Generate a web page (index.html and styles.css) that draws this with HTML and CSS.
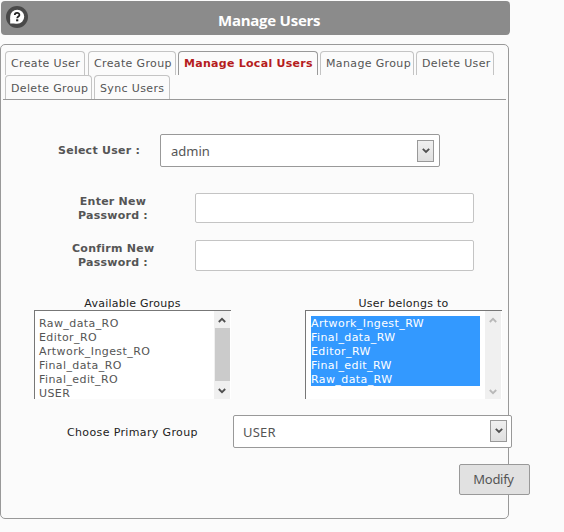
FILE: index.html
```html
<!DOCTYPE html>
<html lang="en">
<head>
<meta charset="utf-8">
<title>Manage Users</title>
<link rel="stylesheet" href="styles.css">
</head>
<body>
<header class="header">
  <svg class="help" width="22" height="22" viewBox="0 0 22 22">
    <circle cx="11" cy="11" r="11" fill="#494949"/>
    <circle cx="11.2" cy="10.7" r="7" fill="#fff"/>
    <path d="M4.2 11V17.6H11Z" fill="#fff"/>
    <path d="M8.8 9C8.8 6.2 13.4 6.2 13.4 8.9C13.4 10.5 11.2 10.5 11.2 12.3" fill="none" stroke="#222" stroke-width="2"/>
    <rect x="10.1" y="13.3" width="2.2" height="2" fill="#222"/>
  </svg>
  <h1 class="title">Manage Users</h1>
</header>
<main class="panel">
  <nav class="tabs">
    <div class="tab-row">
      <a class="tab create-user"><span>Create User</span></a>
      <a class="tab create-group"><span>Create Group</span></a>
      <a class="tab active"><span>Manage Local Users</span></a>
      <a class="tab manage-group"><span>Manage Group</span></a>
      <a class="tab delete-user"><span>Delete User</span></a>
    </div>
    <div class="tab-row second">
      <a class="tab delete-group"><span>Delete Group</span></a>
      <a class="tab sync-users"><span>Sync Users</span></a>
    </div>
  </nav>
  <div class="row user-row">
    <label class="label">Select User :</label>
    <div class="select user-select"><span class="value">admin</span><span class="drop"><svg width="8" height="6" viewBox="0 0 8 6"><path d="M.8 .8L4 4L7.2 .8"/></svg></span></div>
  </div>
  <div class="row password-row">
    <label class="label">Enter New<br>Password :</label>
    <div class="input"></div>
  </div>
  <div class="row confirm-row">
    <label class="label">Confirm New<br>Password :</label>
    <div class="input"></div>
  </div>
  <div class="groups">
    <section class="group">
      <h2 class="caption">Available Groups</h2>
      <div class="list">
        <ul class="items">
          <li>Raw_data_RO</li><li>Editor_RO</li><li>Artwork_Ingest_RO</li><li>Final_data_RO</li><li>Final_edit_RO</li><li>USER</li>
        </ul>
        <div class="scroll"><svg width="8" height="6" viewBox="0 0 8 6"><path d="M.8 5L4 1.8L7.2 5"/></svg><i class="thumb"></i><svg width="8" height="6" viewBox="0 0 8 6"><path d="M.8 1L4 4.2L7.2 1"/></svg></div>
      </div>
    </section>
    <section class="group">
      <h2 class="caption">User belongs to</h2>
      <div class="list">
        <ul class="items selected">
          <li>Artwork_Ingest_RW</li><li>Final_data_RW</li><li>Editor_RW</li><li>Final_edit_RW</li><li>Raw_data_RW</li>
        </ul>
        <div class="scroll disabled"><svg width="8" height="6" viewBox="0 0 8 6"><path d="M.8 5L4 1.8L7.2 5"/></svg><svg width="8" height="6" viewBox="0 0 8 6"><path d="M.8 1L4 4.2L7.2 1"/></svg></div>
      </div>
    </section>
  </div>
  <div class="row primary-row">
    <label class="primary-label">Choose Primary Group</label>
    <div class="select primary-select"><span class="value">USER</span><span class="drop"><svg width="8" height="6" viewBox="0 0 8 6"><path d="M.8 .8L4 4L7.2 .8"/></svg></span></div>
  </div>
  <button class="modify">Modify</button>
</main>
</body>
</html>
```
FILE: styles.css
```css
* { box-sizing: border-box; }
body {
  margin: 0;
  height: 532px;
  overflow: hidden;
  background: #fbfbfb;
  color: #555;
  font: 11px/14px "DejaVu Sans", sans-serif;
  letter-spacing: .36px;
}
.header {
  display: flex;
  width: 509px;
  height: 34px;
  margin: 1px 0 0 1px;
  border-radius: 4px;
  background: #8b8b8b;
}
.help { flex: none; margin: 5px 0 0 5px; }
.title {
  width: 104px;
  margin: 9px 0 0 190px;
  font: bold 15px/20px "Open Sans", sans-serif;
  letter-spacing: -.25px;
  color: #fff;
  white-space: nowrap;
}
.panel {
  width: 509px;
  height: 475px;
  margin-top: 9px;
  border: 1px solid #999;
  border-radius: 5px;
}
.tabs {
  width: 503px;
  margin: 6px 0 0 2px;
  padding-left: 2px;
  border-bottom: 1px solid #999;
}
.tab-row { display: flex; gap: 3px; height: 24px; }
.tab {
  flex: none;
  height: 24px;
  padding: 5px 0 0 5px;
  border: 1px solid #c4c4c4;
  border-bottom: 0;
  border-radius: 4px 4px 0 0;
  white-space: nowrap;
}
.second .tab { padding-top: 6px; }
.create-user { width: 80px; }
.create-group { width: 88px; margin-right: -1px; }
.active { width: 140px; margin-right: -1px; border-color: #999; color: #b51c20; font-weight: bold; letter-spacing: .28px; }
.manage-group { width: 94px; margin-right: -1px; }
.delete-user { width: 78px; }
.delete-group { width: 87px; margin-right: -1px; }
.sync-users { width: 76px; }
.row { display: flex; }
.label { flex: none; font-weight: bold; letter-spacing: .25px; text-align: center; white-space: nowrap; }
.user-row { margin: 34px 0 0 57px; }
.user-row .label { width: 102px; padding-top: 10px; text-align: left; }
.select {
  display: flex;
  flex: none;
  justify-content: space-between;
  height: 33px;
  border: 1px solid #999;
  border-radius: 2px;
  background: #fff;
}
.user-select { width: 280px; padding: 5px 5px 0 10px; }
.value { margin-top: 2px; font: 13px/18px "Noto Sans", sans-serif; letter-spacing: 0; }
.primary-select .value { margin-top: 3px; letter-spacing: .2px; }
.drop {
  display: grid;
  place-items: center;
  width: 17px;
  height: 22px;
  border: 1px solid #999;
  background: linear-gradient(#f0f0f0, #e0e0e0);
}
svg path { stroke-width: 1.8; }
.drop path, .scroll path { fill: none; stroke: #505050; }
.password-row { margin: 26px 0 0 71px; }
.confirm-row { margin: 17px 0 0 71px; }
.password-row .label, .confirm-row .label { width: 82px; padding-top: 2px; }
.input {
  width: 279px;
  height: 30px;
  margin-left: 41px;
  border: 1px solid #c4c4c4;
  border-radius: 2px;
  background: #fff;
}
.confirm-row .input { height: 31px; }
.groups { display: flex; gap: 74px; margin: 26px 0 0 33px; }
.group { width: 197px; }
.caption {
  height: 13px;
  margin: 0;
  font: 11px/14px "DejaVu Sans", sans-serif;
  letter-spacing: .24px;
  color: #222;
  text-align: center;
}
.list {
  display: flex;
  height: 89px;
  border: solid #777;
  border-width: 1px 0 0 1px;
  background: #fff;
}
.items { width: 179px; margin: 0; padding: 5px 0 0 4px; list-style: none; overflow: hidden; }
.items.selected { padding-left: 5px; }
.items li { height: 14px; line-height: 16px; letter-spacing: .41px; }
.selected li { width: 169px; background: #3399ff; color: #fff; }
.scroll {
  display: flex;
  flex-direction: column;
  align-items: center;
  width: 16px;
  padding: 6px 0 4px;
  background: #f0f0f0;
}
.thumb { width: 15px; height: 53px; margin: 5px 0 7px; background: #cbcbcb; }
.disabled { justify-content: space-between; }
.scroll.disabled path { stroke: #b8b8b8; }
.primary-row { margin: 16px 0 0 66px; }
.primary-label { flex: none; width: 166px; padding-top: 11px; color: #222; }
.primary-select { width: 279px; padding: 4px 4px 0 9px; }
.modify {
  display: block;
  width: 71px;
  height: 31px;
  margin: 16px 0 0 458px;
  padding: 0 2px 2px 0;
  border: 1px solid #999;
  border-radius: 2px;
  background: #e1e1e1;
  color: #555;
  font: 13px/18px "Noto Sans", sans-serif;
  letter-spacing: -.3px;
}
```
